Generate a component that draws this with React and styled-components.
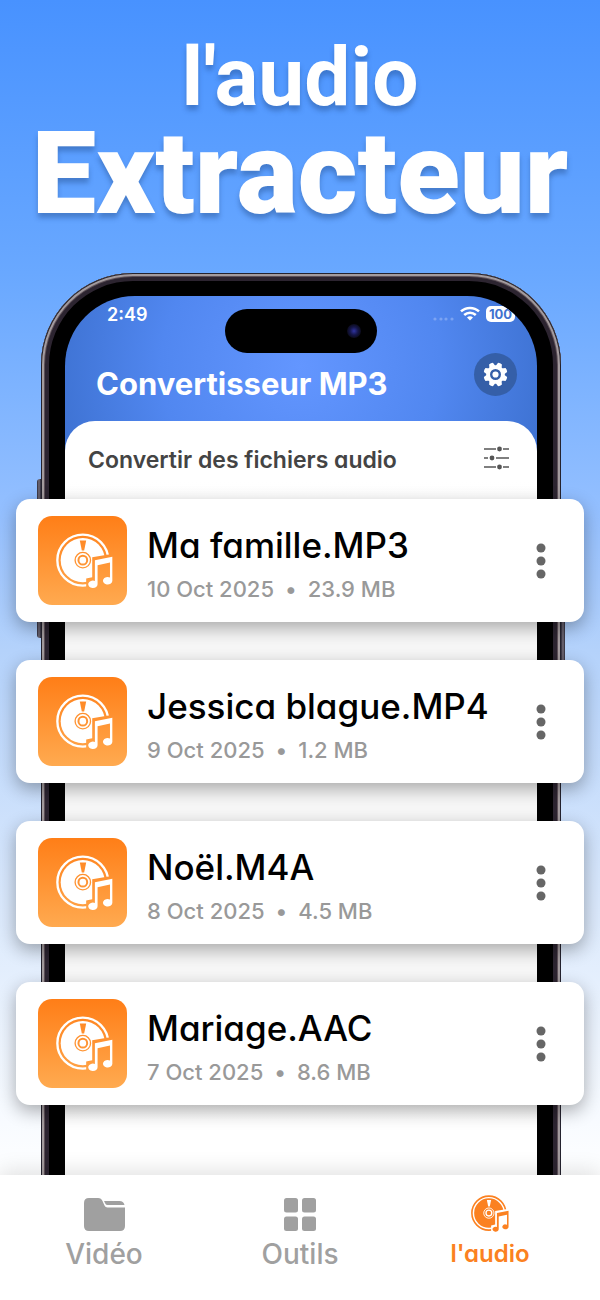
import { useId } from 'react';
import styled, { createGlobalStyle } from 'styled-components';

const GlobalStyle = createGlobalStyle`
  * {
    box-sizing: border-box;
  }

  body {
    margin: 0;
    font-family: Inter, 'Open Sans', sans-serif;
    font-feature-settings: 'cv11' 1;
  }

  button {
    display: flex;
    align-items: center;
    justify-content: center;
    padding: 0;
    border: none;
    background: none;
    cursor: pointer;
  }

  svg {
    display: block;
  }
`;

const Page = styled.div`
  display: flex;
  flex-direction: column;
  min-height: 100vh;
  background: linear-gradient(180deg, #4892ff 0%, #69a8ff 21%, #93bfff 39%, #b4d2fb 50%, #dbe9fc 70%, #f6faff 85%, #ffffff 91%);
`;

const Headline = styled.h1`
  margin: 0;
  padding: 36px 16px 0;
  color: white;
  font-family: Roboto, sans-serif;
  text-align: center;
  text-shadow: 0 5px 5px rgba(30, 70, 130, 0.4);
`;

const HeadlineTop = styled.span`
  display: block;
  font-size: 82px;
  line-height: 82px;
  font-weight: 700;
`;

const HeadlineMain = styled.span`
  display: block;
  font-size: 115px;
  line-height: 112px;
  font-weight: 900;
`;

/* the phone and the file cards share one grid cell */
const Stage = styled.main`
  display: grid;
  flex: 1;
  margin-top: 43px;

  > * {
    grid-area: 1 / 1;
  }
`;

const Phone = styled.div`
  position: relative;
  display: flex;
  margin: 0 39px -16px 41px;
  padding: 23px 24px 0;
  border-radius: 92px 92px 0 0;
  background: black;
  box-shadow: inset 0 0 0 1px #24222e, inset 0 0 0 3px #a39b9e, inset 0 0 0 4px #5d5058, inset 0 0 0 8px #2c2430;

  &::before,
  &::after {
    content: '';
    position: absolute;
    width: 4px;
    background: linear-gradient(90deg, #2a2836, #77707c, #2a2836);
  }

  &::before {
    left: -4px;
    top: 206px;
    height: 159px;
    border-radius: 3px 0 0 3px;
  }

  &::after {
    right: -4px;
    top: 300px;
    height: 120px;
    border-radius: 0 3px 3px 0;
  }
`;

const Screen = styled.div`
  flex: 1;
  display: flex;
  flex-direction: column;
  overflow: hidden;
  border-radius: 70px 70px 0 0;
  background: radial-gradient(circle at 50% 70px, #6396ff 0, #5187f0 140px, #3c70cf 260px);
`;

const StatusBar = styled.div`
  display: grid;
  grid-template-columns: 1fr 152px 1fr;
  height: 57px;
  padding-top: 13px;
  color: white;
`;

const Clock = styled.span`
  padding-left: 42px;
  font-size: 18px;
  line-height: 12px;
  font-weight: 600;
`;

const Island = styled.div`
  display: flex;
  align-items: center;
  justify-content: flex-end;
  height: 44px;
  padding-right: 16px;
  border-radius: 22px;
  background: black;
`;

const Camera = styled.span`
  width: 14px;
  height: 14px;
  border-radius: 50%;
  background: radial-gradient(circle, #3034a0 0, #15164a 40%, #0a0a16 75%);
`;

const StatusIcons = styled.div`
  display: flex;
  align-items: flex-start;
  justify-content: flex-end;
  gap: 6px;
  padding-right: 22px;
  height: 16px;
  margin-top: -3px;
`;

const Battery = styled.span`
  width: 29px;
  border-radius: 5px;
  background: white;
  color: #3f72cf;
  font-size: 13px;
  line-height: 16px;
  font-weight: 700;
  text-align: center;
`;

const AppBar = styled.header`
  display: flex;
  justify-content: space-between;
  height: 68px;
  padding: 0 20px 0 31px;
`;

const AppTitle = styled.h2`
  margin: 0;
  padding-top: 11px;
  color: white;
  font-size: 31px;
  line-height: 40px;
  font-weight: 700;
  white-space: nowrap;
`;

const GearButton = styled.button`
  width: 43px;
  height: 43px;
  border-radius: 50%;
  background: #355fa8 !important;
`;

const Sheet = styled.section`
  flex: 1;
  border-radius: 30px 30px 0 0;
  background: linear-gradient(180deg, #ffffff 0, #ffffff 60px, #f7f7f7 200px, #f7f7f7 620px, #ffffff 700px);
`;

const SheetHead = styled.div`
  display: flex;
  align-items: flex-start;
  justify-content: space-between;
  padding: 19px 28px 0 23px;
`;

const SheetTitle = styled.h3`
  margin: 0;
  color: #444;
  font-size: 23px;
  line-height: 40px;
  font-weight: 600;
  white-space: nowrap;
`;

const FilterButton = styled.button`
  height: 36px;
`;

const FileList = styled.ul`
  z-index: 1;
  display: flex;
  flex-direction: column;
  gap: 38px;
  margin: 0;
  padding: 226px 16px 70px;
  list-style: none;
`;

const FileCard = styled.li`
  display: flex;
  align-items: center;
  height: 123px;
  padding: 0 30px 0 22px;
  border-radius: 14px;
  background: white;
  box-shadow: 0 6px 18px rgba(0, 0, 0, 0.32);
`;

const FileTile = styled.div`
  display: flex;
  align-items: center;
  justify-content: center;
  flex: none;
  width: 89px;
  height: 89px;
  padding: 2px 0 0 3px;
  border-radius: 14px;
  background: linear-gradient(180deg, #ff7e17, #ffaa50);
  color: white;
`;

const FileText = styled.div`
  flex: 1;
  padding: 8px 0 0 20px;
  white-space: nowrap;
`;

const FileName = styled.div`
  color: black;
  font-size: 35px;
  line-height: 48px;
  font-weight: 500;
`;

const FileMeta = styled.div`
  display: flex;
  gap: 11px;
  color: #999;
  font-size: 22px;
  line-height: 40px;
  font-weight: 500;
`;

const MoreButton = styled.button`
  width: 26px;
  height: 48px;
  color: #666;
`;

const TabBar = styled.nav`
  z-index: 2;
  display: grid;
  grid-template-columns: 208fr 184fr 196fr;
  height: 126px;
  padding: 20px 12px 0 0;
  background: white;
  box-shadow: 0 -4px 20px rgba(0, 0, 0, 0.12);
`;

const Tab = styled.a`
  display: flex;
  flex-direction: column;
  align-items: center;
  gap: 3px;
  color: ${({ $active }) => ($active ? '#fb8121' : '#a0a0a0')};
  font-size: ${({ $active }) => ($active ? '24px' : '28px')};
  line-height: 36px;
  font-weight: ${({ $active }) => ($active ? 600 : 500)};
  text-decoration: none;
`;

const TabIcon = styled.span`
  display: flex;
  align-items: center;
  height: 38px;
`;

const NOTE = 'M116 81L168 71V143A14 11 0 1 1 161 133V88L124 96V152A14 11 0 1 1 116 143Z';

const DiscIcon = ({ size }) => {
  const id = useId();
  return (
    <svg width={size} height={size} viewBox="0 0 170 170" fill="none" aria-hidden="true">
      <mask id={id} maskUnits="userSpaceOnUse" x="0" y="0" width="170" height="170">
        <rect width="170" height="170" fill="#fff" />
        <circle cx="80" cy="81" r="23" stroke="#000" strokeWidth="4" />
        <circle cx="80" cy="81" r="13" stroke="#000" strokeWidth="6" />
        <path d="M71 22H90L84 52H77Z" fill="#000" />
        <path d="M108 72L170 62V170H122L90 164V136L108 132Z" fill="#000" />
      </mask>
      <g mask={`url(#${id})`}>
        <circle cx="80" cy="81" r="76" stroke="currentColor" strokeWidth="7" />
        <circle cx="80" cy="81" r="66" fill="currentColor" />
      </g>
      <path d={NOTE} fill="currentColor" />
    </svg>
  );
};

const WifiIcon = () => (
  <svg width="20" height="15" viewBox="0 0 20 15" fill="none" stroke="currentColor" strokeWidth="2.6" aria-hidden="true">
    <path d="M1 5.4C6 .8 14 .8 19 5.4" />
    <path d="M4.2 9C7.6 6 12.4 6 15.8 9" />
    <path d="M10 14.4L7 11.4C8.8 9.9 11.2 9.9 13 11.4Z" fill="currentColor" stroke="none" />
  </svg>
);

const SignalIcon = () => (
  <svg width="21" height="16" viewBox="0 0 21 16" fill="#8fb0f5" aria-hidden="true">
    {[2, 8, 13, 19].map((x) => (
      <circle key={x} cx={x} cy="13" r="1.6" opacity="0.7" />
    ))}
  </svg>
);

const GearIcon = () => (
  <svg width="25" height="25" viewBox="-13 -13 26 26" fill="#fff" aria-hidden="true">
    {[0, 45, 90, 135, 180, 225, 270, 315].map((angle) => (
      <path key={angle} d="M-3.4 -8L-2.2 -12.2Q0 -13 2.2 -12.2L3.4 -8Z" transform={`rotate(${angle + 22.5})`} />
    ))}
    <circle r="7.7" fill="none" stroke="#fff" strokeWidth="4" />
    <circle r="3.2" />
  </svg>
);

const FilterIcon = () => (
  <svg width="25" height="24" viewBox="0 0 25 24" stroke="#555" strokeWidth="1.6" aria-hidden="true">
    <path d="M0 3H12M19 3H25M0 12H4M12 12H25M0 21H12M19 21H25" />
    <g fill="#555" stroke="none">
      <circle cx="15.5" cy="3" r="2.4" />
      <circle cx="8" cy="12" r="2.4" />
      <circle cx="15.5" cy="21" r="2.4" />
    </g>
  </svg>
);

const MoreIcon = () => (
  <svg width="10" height="36" viewBox="0 0 10 36" fill="currentColor" aria-hidden="true">
    <circle cx="5" cy="5" r="4.5" />
    <circle cx="5" cy="18" r="4.5" />
    <circle cx="5" cy="31" r="4.5" />
  </svg>
);

const FolderIcon = () => (
  <svg width="41" height="33" viewBox="0 0 41 33" fill="currentColor" aria-hidden="true">
    <path d="M5 0H14C16.5 0 17.500 1 18.500 3L20.500 7.500Q21.400 9.400 23.500 9.400H41V28Q41 33 36 33H5Q0 33 0 28V5Q0 0 5 0Z" />
    <path d="M20 3H35.500Q39.500 3 40.500 7H23.500Q22 7 21.500 6Z" />
  </svg>
);

const GridIcon = () => (
  <svg width="32" height="33" viewBox="0 0 32 33" fill="currentColor" aria-hidden="true">
    <rect width="14" height="14.500" rx="2.500" />
    <rect x="18" width="14" height="14.500" rx="2.500" />
    <rect y="18.500" width="14" height="14.500" rx="2.500" />
    <rect x="18" y="18.500" width="14" height="14.500" rx="2.500" />
  </svg>
);

const files = [
  { name: 'Ma famille.MP3', date: '10 Oct 2025', size: '23.9 MB' },
  { name: 'Jessica blague.MP4', date: '9 Oct 2025', size: '1.2 MB' },
  { name: 'Noël.M4A', date: '8 Oct 2025', size: '4.5 MB' },
  { name: 'Mariage.AAC', date: '7 Oct 2025', size: '8.6 MB' },
];

const App = () => {
  return (
    <Page>
      <GlobalStyle />
      <Headline>
        <HeadlineTop>l'audio</HeadlineTop>
        <HeadlineMain>Extracteur</HeadlineMain>
      </Headline>

      <Stage>
        <Phone>
          <Screen>
            <StatusBar>
              <Clock>2:49</Clock>
              <Island>
                <Camera />
              </Island>
              <StatusIcons>
                <SignalIcon />
                <WifiIcon />
                <Battery>100</Battery>
              </StatusIcons>
            </StatusBar>
            <AppBar>
              <AppTitle>Convertisseur MP3</AppTitle>
              <GearButton type="button" aria-label="Réglages">
                <GearIcon />
              </GearButton>
            </AppBar>
            <Sheet>
              <SheetHead>
                <SheetTitle>Convertir des fichiers audio</SheetTitle>
                <FilterButton type="button" aria-label="Filtrer">
                  <FilterIcon />
                </FilterButton>
              </SheetHead>
            </Sheet>
          </Screen>
        </Phone>

        <FileList>
          {files.map((file) => (
            <FileCard key={file.name}>
              <FileTile>
                <DiscIcon size={57} />
              </FileTile>
              <FileText>
                <FileName>{file.name}</FileName>
                <FileMeta>
                  <span>{file.date}</span>
                  <span>•</span>
                  <span>{file.size}</span>
                </FileMeta>
              </FileText>
              <MoreButton type="button" aria-label={`Options de ${file.name}`}>
                <MoreIcon />
              </MoreButton>
            </FileCard>
          ))}
        </FileList>
      </Stage>

      <TabBar>
        <Tab href="#video">
          <TabIcon>
            <FolderIcon />
          </TabIcon>
          Vidéo
        </Tab>
        <Tab href="#outils">
          <TabIcon>
            <GridIcon />
          </TabIcon>
          Outils
        </Tab>
        <Tab href="#audio" $active>
          <TabIcon>
            <DiscIcon size={38} />
          </TabIcon>
          l'audio
        </Tab>
      </TabBar>
    </Page>
  );
};

export default App;
